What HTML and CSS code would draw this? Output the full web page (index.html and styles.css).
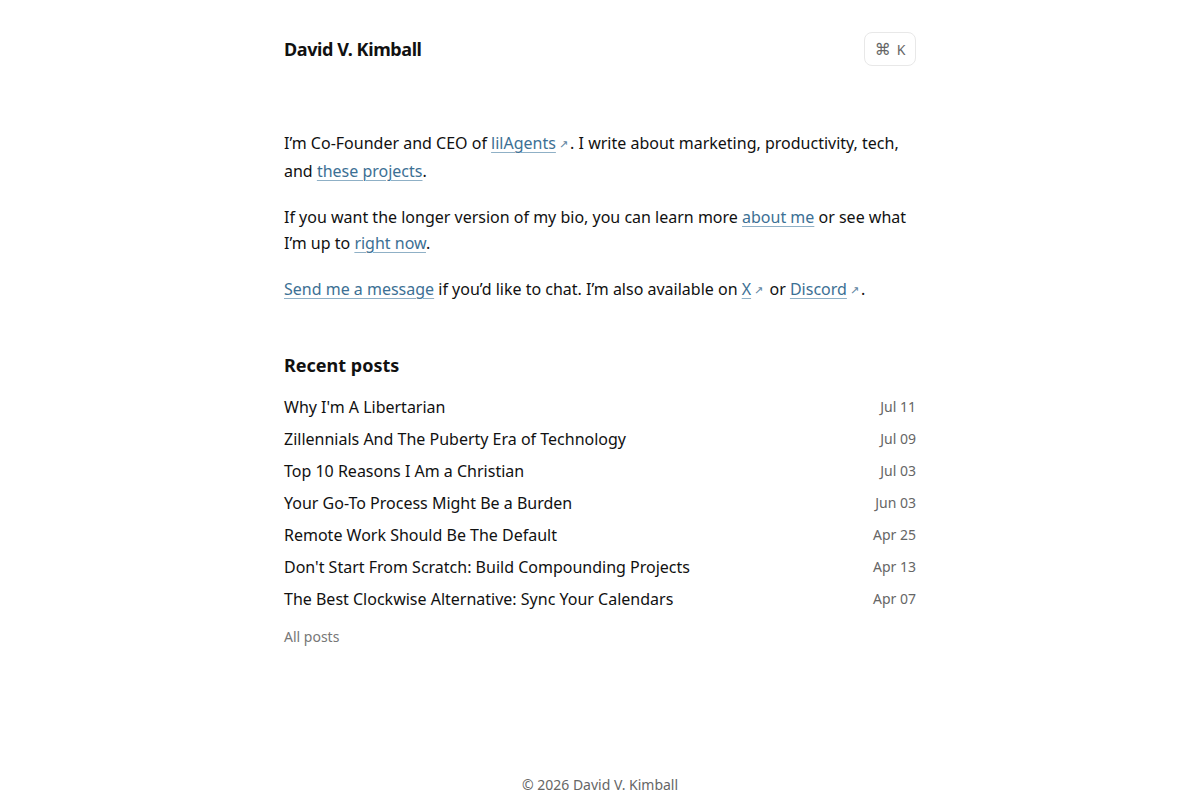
FILE: index.html
```html
<!DOCTYPE html>
<html lang="en">
<head>
    <meta charset="UTF-8">
    <meta name="viewport" content="width=device-width, initial-scale=1.0">
    <title>David V. Kimball</title>
    <link rel="stylesheet" href="styles.css">
</head>
<body>
    <div class="page">
        <header class="site-header">
            <a href="#" class="site-title">David V. Kimball</a>
            <button class="search-btn" type="button"><span class="cmd">⌘</span><span class="key">K</span></button>
        </header>

        <main>
            <section class="intro">
                <p class="lead">I’m Co-Founder and CEO of <a href="#">lilAgents</a><span class="arrow">↗</span>. I write about marketing, productivity, tech, and <a href="#">these projects</a>.</p>
                <p>If you want the longer version of my bio, you can learn more <a href="#">about me</a> or see what I’m up to <a href="#">right now</a>.</p>
                <p><a href="#">Send me a message</a> if you’d like to chat. I’m also available on <a href="#">X</a><span class="arrow">↗</span> or <a href="#">Discord</a><span class="arrow">↗</span>.</p>
            </section>

            <section class="posts">
                <h2>Recent posts</h2>
                <ul class="post-list">
                    <li><a href="#">Why I'm A Libertarian</a><time>Jul 11</time></li>
                    <li><a href="#">Zillennials And The Puberty Era of Technology</a><time>Jul 09</time></li>
                    <li><a href="#">Top 10 Reasons I Am a Christian</a><time>Jul 03</time></li>
                    <li><a href="#">Your Go-To Process Might Be a Burden</a><time>Jun 03</time></li>
                    <li><a href="#">Remote Work Should Be The Default</a><time>Apr 25</time></li>
                    <li><a href="#">Don't Start From Scratch: Build Compounding Projects</a><time>Apr 13</time></li>
                    <li><a href="#">The Best Clockwise Alternative: Sync Your Calendars</a><time>Apr 07</time></li>
                </ul>
                <a href="#" class="all-posts">All posts</a>
            </section>
        </main>

        <footer class="site-footer">© 2026 David V. Kimball</footer>
    </div>
</body>
</html>
```

FILE: styles.css
```css
* {
    margin: 0;
    padding: 0;
    box-sizing: border-box;
}

body {
    font-family: 'Noto Sans', 'Open Sans', sans-serif;
    color: #111;
    background: #fff;
    font-size: 16px;
    line-height: 26px;
}

a {
    color: inherit;
    text-decoration: none;
}

.page {
    max-width: 632px;
    margin: 0 auto;
    min-height: 100vh;
    display: flex;
    flex-direction: column;
}

.site-header {
    display: flex;
    justify-content: space-between;
    align-items: center;
    padding-top: 32px;
}

.site-title {
    font-size: 18px;
    font-weight: 700;
    line-height: 34px;
    letter-spacing: -0.4px;
}

.search-btn {
    font-family: inherit;
    color: #666;
    background: #fff;
    border: 1px solid #e8e8e8;
    border-radius: 8px;
    width: 52px;
    height: 34px;
    display: flex;
    align-items: center;
    justify-content: center;
    gap: 6px;
}

.search-btn .cmd {
    font-family: 'DejaVu Sans', sans-serif;
    font-size: 16px;
}

.search-btn .key {
    font-size: 14px;
}

.intro {
    margin-top: 63px;
}

.intro p {
    margin-bottom: 20px;
}

/* first paragraph gets a touch more leading */
.intro p.lead {
    line-height: 28px;
    margin-bottom: 19px;
}

.intro a {
    color: #3c7094;
    text-decoration: underline;
    text-decoration-color: #8fb0c6;
    text-underline-offset: 3px;
    text-decoration-thickness: 1px;
}

.arrow {
    font-family: 'DejaVu Sans', sans-serif;
    font-size: 11px;
    line-height: 0;
    color: #5f84a0;
    margin: 0 2px 0 3px;
    vertical-align: 1px;
}

.posts {
    margin-top: 49px;
}

.posts h2 {
    font-size: 18px;
    font-weight: 700;
    line-height: 28px;
    margin-bottom: 12px;
}

.post-list {
    list-style: none;
}

.post-list li {
    display: flex;
    justify-content: space-between;
    align-items: center;
    height: 32px;
}

.post-list time {
    font-size: 14px;
    color: #666;
}

.all-posts {
    display: inline-block;
    margin-top: 12px;
    font-size: 14px;
    line-height: 20px;
    color: #777;
}

.site-footer {
    margin-top: auto;
    text-align: center;
    font-size: 14px;
    line-height: 20px;
    color: #666;
    padding-bottom: 5px;
}
```
